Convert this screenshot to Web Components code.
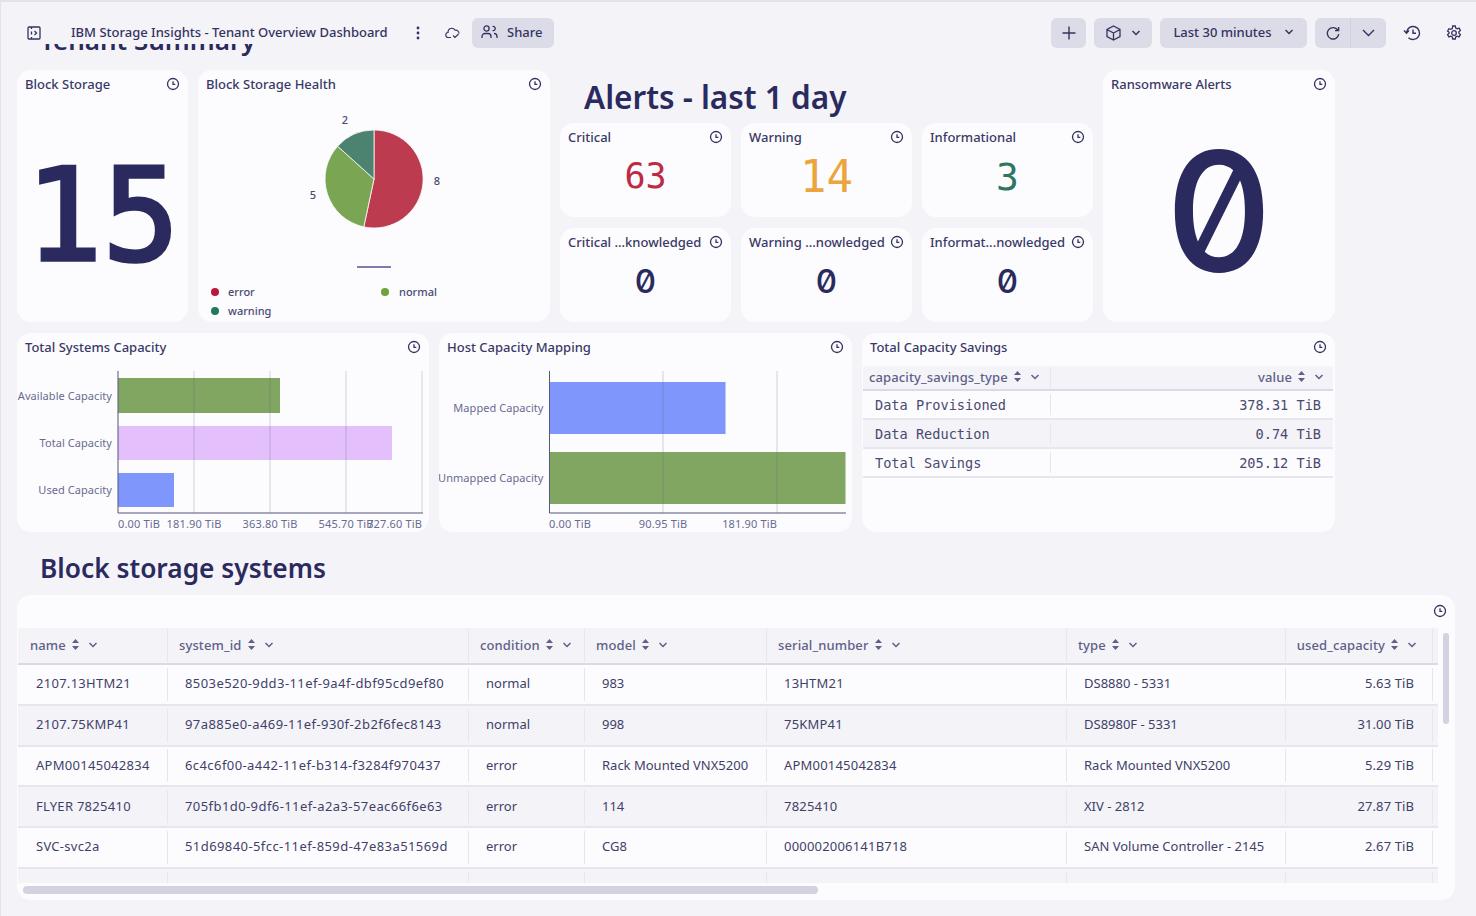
<!DOCTYPE html>
<html lang="en">
<head>
<meta charset="utf-8">
<title>IBM Storage Insights - Tenant Overview Dashboard</title>
<style>
  html, body { margin: 0; height: 100%; }
  body {
    background: #f3f3f8;
    color: #2b2a5e;
    font-family: "Noto Sans", sans-serif;
    overflow: hidden;
  }
</style>
</head>
<body>
<wc-app></wc-app>

<script>
const SANS = "'Noto Sans', 'Liberation Sans', sans-serif";
const MONO = "'DejaVu Sans Mono', 'Liberation Mono', monospace";

const CLOCK = `<svg width="14" height="14" viewBox="0 0 14 14" fill="none" stroke="#34335f" stroke-width="1.3"><circle cx="7" cy="7" r="5.5"/><path d="M7 4.2V7.3H9.3"/></svg>`;
const CARET = `<svg width="10" height="6" viewBox="0 0 10 6" fill="none" stroke="currentColor" stroke-width="1.5"><path d="M1.5 1l3.5 3.5L8.5 1"/></svg>`;
const SORT = `<svg width="7" height="11" viewBox="0 0 7 11" fill="currentColor"><path d="M3.5 0L7 4H0zM3.5 11L0 7h7z"/></svg>`;

class WcButton extends HTMLElement {
  constructor() {
    super();
    this.attachShadow({ mode: 'open' });
    this.shadowRoot.innerHTML = `
    <style>
      :host {
        display: inline-flex;
        align-items: center;
        justify-content: center;
        gap: 9px;
        height: 30px;
        padding: 0 10px 2px;
        box-sizing: border-box;
        background: #dcdce8;
        border-radius: 6px;
        font-size: 13px;
        font-weight: 500;
        color: #34335f;
      }
    </style>
    <slot></slot>`;
  }
}
customElements.define('wc-button', WcButton);

class WcHeader extends HTMLElement {
  constructor() {
    super();
    this.attachShadow({ mode: 'open' });
    this.shadowRoot.innerHTML = `
    <style>
      :host {
        display: flex;
        align-items: flex-start;
        position: relative;
        z-index: 2;
        height: 44px;
        box-sizing: border-box;
        padding: 18px 14px 0 27px;
        color: #34335f;
      }
      svg { display: block; }
      .title { margin-left: 30px; font-size: 13px; font-weight: 500; line-height: 28px; width: 318px; white-space: nowrap; }
      .icon { height: 30px; display: flex; align-items: center; }
      .spacer { flex: 1; }
      .split { display: flex; background: #dcdce8; border-radius: 6px; height: 30px; }
      .split > div { display: flex; align-items: center; justify-content: center; }
    </style>
    <div class="icon"><svg width="14" height="14" viewBox="0 0 14 14" fill="none" stroke="#34335f" stroke-width="1.3"><rect x="1" y="1" width="12" height="12" rx="1"/><path d="M4.5 1v2M4.5 5.5v3M4.5 11v2M7.5 5l2 2-2 2"/></svg></div>
    <div class="title">IBM Storage Insights - Tenant Overview Dashboard</div>
    <div class="icon" style="margin-left:27px"><svg width="4" height="14" viewBox="0 0 4 14" fill="#34335f"><circle cx="2" cy="2" r="1.4"/><circle cx="2" cy="7" r="1.4"/><circle cx="2" cy="12" r="1.4"/></svg></div>
    <div class="icon" style="margin-left:25px"><svg width="16" height="12" viewBox="0 0 16 12" fill="none" stroke="#34335f" stroke-width="1.1"><path d="M6 10.5H3.5a2.5 2.5 0 0 1-.4-5A3.700 3.700 0 0 1 10 3.200a3.200 3.200 0 0 1 4 3.300M8 8.500l2 2 3.500-3.500"/></svg></div>
    <wc-button style="margin-left:11px;width:82px;justify-content:flex-start;padding-left:9px">
      <svg width="17" height="14" viewBox="0 0 17 14" fill="none" stroke="#34335f" stroke-width="1.3"><circle cx="5.5" cy="3.5" r="2.6"/><path d="M1 13v-1.5A3 3 0 0 1 4 8.500h3a3 3 0 0 1 3 3V13M11.500 1.500a2.100 2.100 0 1 1 0 4M13 8.500a3 3 0 0 1 3 3V13"/></svg>
      <span>Share</span>
    </wc-button>
    <div class="spacer"></div>
    <wc-button style="width:35px;padding:0"><svg width="14" height="14" viewBox="0 0 14 14" fill="none" stroke="#34335f" stroke-width="1.4"><path d="M7 .5v13M.5 7h13"/></svg></wc-button>
    <wc-button style="margin-left:8px;width:58px;gap:10px;padding:0"><svg width="15" height="16" viewBox="0 0 15 16" fill="none" stroke="#34335f" stroke-width="1.3"><path d="M7.500 1L14 4.500v7L7.500 15 1 11.500v-7zM1 4.500L7.500 8 14 4.500M7.500 8v7"/></svg>${CARET}</wc-button>
    <wc-button style="margin-left:8px;width:147px;gap:12px;padding:0 0 2px">Last 30 minutes ${CARET}</wc-button>
    <div class="split" style="margin-left:8px;width:71px">
      <div style="width:35px;border-right:1px solid #cfcfdf"><svg width="14" height="14" viewBox="0 0 14 14" fill="none" stroke="#34335f" stroke-width="1.4"><path d="M11.800 4.200A5.700 5.700 0 1 0 12.700 8M12.600 1v3.600H9"/></svg></div>
      <div style="flex:1"><svg width="13" height="8" viewBox="0 0 13 8" fill="none" stroke="#34335f" stroke-width="1.4"><path d="M1 1l5.500 5.500L12 1"/></svg></div>
    </div>
    <div class="icon" style="margin-left:17px"><svg width="18" height="16" viewBox="0 0 18 16" fill="none" stroke="#34335f" stroke-width="1.4"><path d="M3.500 7.500A6.500 6.500 0 1 1 5.500 12.700M1 5.500l2.500 2.700L6 5.500M10 4.500V8.300h3"/></svg></div>
    <div class="icon" style="margin-left:25px"><svg width="16" height="16" viewBox="0 0 16 16" fill="none" stroke="#34335f" stroke-width="1.3"><circle cx="8" cy="8" r="2.300"/><path d="M6.700 1h2.600l.4 2 1.500.8 1.900-.7 1.300 2.300-1.500 1.300v1.600l1.500 1.300-1.300 2.300-1.900-.7-1.500.8-.4 2H6.700l-.4-2-1.500-.8-1.900.7-1.300-2.300 1.500-1.300V7.300L1.600 6l1.300-2.300 1.900.7 1.500-.8z"/></svg></div>`;
  }
}
customElements.define('wc-header', WcHeader);

// one tile of the dashboard: title row with the clock, content in the slot
class WcPanel extends HTMLElement {
  constructor() {
    super();
    this.attachShadow({ mode: 'open' });
    this.shadowRoot.innerHTML = `
    <style>
      :host {
        display: flex;
        flex-direction: column;
        min-width: 0;
        background: #fcfcfe;
        border-radius: 14px;
        overflow: hidden;
        font-family: ${SANS};
      }
      .head {
        display: flex;
        justify-content: space-between;
        align-items: center;
        height: 29px;
        box-sizing: border-box;
        padding: 0 8px 1px 8px;
        flex: none;
        font-size: 13px;
        font-weight: 500;
        color: #3a3966;
      }
      .head span { white-space: nowrap; }
      svg { display: block; }
      .body { flex: 1; display: flex; min-height: 0; position: relative; }
      ::slotted(*) { flex: 1; min-width: 0; }
    </style>
    <div class="head"><span></span>${CLOCK}</div>
    <div class="body"><slot></slot></div>`;
  }
  connectedCallback() {
    this.shadowRoot.querySelector('.head span').textContent = this.getAttribute('label') || '';
  }
}
customElements.define('wc-panel', WcPanel);

class WcValue extends HTMLElement {
  constructor() {
    super();
    this.attachShadow({ mode: 'open' });
    this.shadowRoot.innerHTML = `
    <style>
      :host { display: flex; align-items: center; justify-content: center; line-height: 1; font-family: ${MONO}; box-sizing: border-box; }
      /* slashed zero: only Inter has the feature among the installed fonts */
      :host([zero]) { font-family: Inter, sans-serif; font-weight: 500; font-feature-settings: "zero"; }
    </style>
    <slot></slot>`;
  }
}
customElements.define('wc-value', WcValue);

class WcPie extends HTMLElement {
  constructor() {
    super();
    this.attachShadow({ mode: 'open' });
    const cx = 176, cy = 80, r = 49;
    const pt = deg => (cx + r * Math.sin(deg * Math.PI / 180)).toFixed(1) + ' ' + (cy - r * Math.cos(deg * Math.PI / 180)).toFixed(1);
    const slice = (a, b, c) => `<path d="M${cx} ${cy}L${pt(a)}A${r} ${r} 0 ${b - a > 180 ? 1 : 0} 1 ${pt(b)}Z" fill="${c}" stroke="#fcfcfe" stroke-width=".8"/>`;
    this.shadowRoot.innerHTML = `
    <style>
      :host { display: block; }
      svg { display: block; position: absolute; left: 0; top: 0; }
      text { font-family: ${SANS}; font-size: 11px; font-weight: 500; fill: #4a4a72; }
    </style>
    <svg width="352" height="223" viewBox="0 0 352 223">
      ${slice(0, 192, '#bd3b4f')}${slice(192, 312, '#7aa653')}${slice(312, 360, '#4b8370')}
      <text x="147" y="25" text-anchor="middle">2</text>
      <text x="239" y="86" text-anchor="middle">8</text>
      <text x="115" y="100" text-anchor="middle">5</text>
      <rect x="159" y="167" width="34" height="2" fill="#7c7cae"/>
      <circle cx="17" cy="193" r="4" fill="#b8183a"/><text x="30" y="197">error</text>
      <circle cx="187" cy="193" r="4" fill="#6fa13d"/><text x="201" y="197">normal</text>
      <circle cx="17" cy="212" r="4" fill="#20795a"/><text x="30" y="216">warning</text>
    </svg>`;
  }
}
customElements.define('wc-pie', WcPie);

// horizontal bars, drawn in panel coordinates since the plot is a free canvas
class WcBars extends HTMLElement {
  set config(c) {
    const root = this.shadowRoot || this.attachShadow({ mode: 'open' });
    root.innerHTML = `
    <style>
      :host { display: block; }
      svg { display: block; position: absolute; left: 0; top: 0; overflow: visible; }
      text { font-family: ${SANS}; font-size: 11px; letter-spacing: .06px; fill: #6a6a90; }
    </style>
    <svg width="${c.w}" height="170">
      ${c.bars.map(b => `
        <rect x="${c.x0}" y="${b.y}" width="${b.w}" height="${b.h}" fill="${b.c}"/>
        <text x="${c.x0 - 6}" y="${b.y + b.h / 2 + 4}" text-anchor="end">${b.label}</text>`).join('')}
      ${c.grid.map(x => `<line x1="${x}" x2="${x}" y1="${c.top}" y2="${c.base}" stroke="#55557d" stroke-opacity=".25"/>`).join('')}
      <path d="M${c.x0} ${c.top}V${c.base}H${c.w - 6}" fill="none" stroke="#55557d"/>
      ${c.ticks.map(t => `<text x="${t.x}" y="${c.base + 15}" text-anchor="${t.a || 'middle'}" style="letter-spacing:.15px">${t.t}</text>`).join('')}
    </svg>`;
  }
}
customElements.define('wc-bars', WcBars);

class WcHeading extends HTMLElement {
  constructor() {
    super();
    this.attachShadow({ mode: 'open' });
    this.shadowRoot.innerHTML = `
    <style>
      :host { display: block; font-weight: 600; color: #2b2a5e; white-space: nowrap; line-height: 1; }
    </style>
    <slot></slot>`;
  }
}
customElements.define('wc-heading', WcHeading);

// table: columns [{key,w,right,ls}], rows of arrays
class WcTable extends HTMLElement {
  set config(c) {
    const root = this.shadowRoot || this.attachShadow({ mode: 'open' });
    const cols = c.cols.map(k => k.w + 'px').join(' ');
    const cell = (txt, col) => `<div class="cell${col.right ? ' right' : ''}"><span style="letter-spacing:${col.ls || 0}px">${txt}</span></div>`;
    root.innerHTML = `
    <style>
      :host { display: block; overflow: hidden; color: ${c.color}; }
      .row { display: grid; grid-template-columns: ${cols}; height: ${c.rowH}px; box-sizing: border-box; align-items: center; border-bottom: 2px solid #e6e6ef; }
      .row.odd { background: #f3f3f8; }
      .row.head { background: #f3f3f8; height: ${c.headH}px; border-bottom: 2px solid #dadae6; color: #5f5f88; font-family: ${SANS}; font-size: 13px; font-weight: 500; letter-spacing: .12px; }
      .row.body { font-family: ${c.font}; font-size: ${c.size}px; }
      .cell { display: flex; align-items: center; height: ${c.divH}px; box-sizing: border-box; padding: 0 ${c.padR}px ${c.padB}px ${c.padL}px; border-right: 1.500px solid #e6e6ef; white-space: nowrap; gap: 6px; }
      .cell.right { justify-content: flex-end; }
      ${c.bareLast ? '.cell:last-child { border-right: 0; }' : ''}
      .head .cell { padding: 0 ${c.headR}px 2px ${c.headL}px; }
      .row .cell:first-child { padding-left: ${c.padL + (c.firstExtra || 0)}px; }
      .head .cell:first-child { padding-left: ${c.headL + (c.firstExtra || 0)}px; }
      svg { display: block; flex: none; }
      svg + svg { margin-left: 3px; }
    </style>
    <div class="row head">${c.cols.map(k => `<div class="cell${k.right ? ' right' : ''}"><span>${k.key}</span>${SORT}${CARET}</div>`).join('')}</div>
    ${c.rows.map((r, i) => `<div class="row body${i % 2 ? ' odd' : ''}">${r.map((t, j) => cell(t, c.cols[j])).join('')}</div>`).join('')}`;
  }
}
customElements.define('wc-table', WcTable);

class WcScrollbar extends HTMLElement {
  constructor() {
    super();
    this.attachShadow({ mode: 'open' });
    this.shadowRoot.innerHTML = `<style>:host { display: block; position: absolute; background: #d2d2e0; border-radius: 4px; }</style>`;
  }
}
customElements.define('wc-scrollbar', WcScrollbar);

class WcApp extends HTMLElement {
  constructor() {
    super();
    this.attachShadow({ mode: 'open' });
    this.shadowRoot.innerHTML = `
    <style>
      :host {
        display: block;
        width: 1476px;
        height: 916px;
        overflow: hidden;
        background: #f3f3f8;
        box-shadow: inset 1px 2px 0 #e2e2ea;
        font-family: ${SANS};
        color: #2b2a5e;
      }
      main { height: 872px; overflow: hidden; padding: 0 0 0 17px; }
      .sec { margin: -17px 0 0 23px; font-size: 26px; height: 43px; }
      .row1 { display: grid; grid-template-columns: 171px 352px 532px 233px; column-gap: 10px; height: 252px; }
      .row1 > :last-child { margin-left: 1px; }
      .alerts { display: flex; flex-direction: column; min-width: 0; }
      .alerts wc-heading { font-size: 31.500px; margin: 11px 0 0 24px; height: 42px; }
      .stats { display: grid; grid-template-columns: repeat(3, 171px); grid-template-rows: 94px 94px; column-gap: 10px; row-gap: 11px; }
      .row2 { display: grid; grid-template-columns: 412px 413px 473px; column-gap: 10px; height: 199px; margin-top: 11px; }
      .sys { font-size: 26.300px; margin: 23px 0 12px 23px; height: 28px; }
      .tablecard { position: relative; display: block; width: 1438px; height: 305px; background: #fcfcfe; border-radius: 14px; overflow: hidden; }
      .tablecard .clock { display: flex; justify-content: flex-end; padding: 9px 8px 0; height: 24px; }
      .stat { padding-bottom: 16px; }
    </style>
    <wc-header></wc-header>
    <main>
      <wc-heading class="sec">Tenant Summary</wc-heading>
      <section class="row1">
        <wc-panel label="Block Storage"><wc-value style="font-size:128px;padding-top:10px;-webkit-text-stroke:3.500px #2b2a5e">15</wc-value></wc-panel>
        <wc-panel label="Block Storage Health"><wc-pie></wc-pie></wc-panel>
        <div class="alerts">
          <wc-heading>Alerts - last 1 day</wc-heading>
          <div class="stats">
            <wc-panel label="Critical"><wc-value class="stat" style="font-size:35px;color:#bd2a44">63</wc-value></wc-panel>
            <wc-panel label="Warning"><wc-value class="stat" style="font-size:44px;color:#eba53c">14</wc-value></wc-panel>
            <wc-panel label="Informational"><wc-value class="stat" style="font-size:38px;color:#2f7562">3</wc-value></wc-panel>
            <wc-panel label="Critical ...knowledged"><wc-value zero class="stat" style="font-size:33px">0</wc-value></wc-panel>
            <wc-panel label="Warning ...nowledged"><wc-value zero class="stat" style="font-size:33px">0</wc-value></wc-panel>
            <wc-panel label="Informat...nowledged"><wc-value zero class="stat" style="font-size:33px">0</wc-value></wc-panel>
          </div>
        </div>
        <wc-panel label="Ransomware Alerts"><wc-value zero style="font-size:165px;padding-top:2px">0</wc-value></wc-panel>
      </section>
      <section class="row2">
        <wc-panel label="Total Systems Capacity"><wc-bars id="b1"></wc-bars></wc-panel>
        <wc-panel label="Host Capacity Mapping"><wc-bars id="b2"></wc-bars></wc-panel>
        <wc-panel label="Total Capacity Savings"><wc-table id="t1" style="margin:4px 2px 0 1px"></wc-table></wc-panel>
      </section>
      <wc-heading class="sys">Block storage systems</wc-heading>
      <div class="tablecard">
        <div class="clock">${CLOCK}</div>
        <wc-table id="t2" style="width:1420px;height:255px;margin-left:1px"></wc-table>
        <wc-scrollbar style="left:6px;top:291px;width:795px;height:8px"></wc-scrollbar>
        <wc-scrollbar style="left:1426px;top:38px;width:6px;height:91px"></wc-scrollbar>
      </div>
    </main>`;

    const $ = id => this.shadowRoot.getElementById(id);
    const GREEN = '#80a661', PINK = '#e3bffb', BLUE = '#7f96fc';
    $('b1').config = {
      w: 412, x0: 101, top: 9, base: 151, grid: [177, 253, 329, 405],
      bars: [
        { y: 16, h: 35, w: 162, c: GREEN, label: 'Available Capacity' },
        { y: 64, h: 34, w: 274, c: PINK, label: 'Total Capacity' },
        { y: 111, h: 34, w: 56, c: BLUE, label: 'Used Capacity' }
      ],
      ticks: [
        { x: 101, t: '0.00 TiB', a: 'start' }, { x: 177, t: '181.90 TiB' }, { x: 253, t: '363.80 TiB' },
        { x: 329, t: '545.70 TiB' }, { x: 405, t: '727.60 TiB', a: 'end' }
      ]
    };
    $('b2').config = {
      w: 413, x0: 110.5, top: 9, base: 151, grid: [224, 338],
      bars: [
        { y: 20, h: 52, w: 176, c: BLUE, label: 'Mapped Capacity' },
        { y: 90, h: 52, w: 296, c: GREEN, label: 'Unmapped Capacity' }
      ],
      ticks: [
        { x: 110, t: '0.00 TiB', a: 'start' }, { x: 224, t: '90.95 TiB' }, { x: 338, t: '181.90 TiB', a: 'end' }
      ]
    };
    $('t1').config = {
      font: MONO, size: 13.6, color: '#4a4a70', rowH: 29, headH: 25, divH: 21, padL: 12, padR: 12, padB: 0, headL: 6, headR: 9, bareLast: true,
      cols: [{ key: 'capacity_savings_type', w: 188 }, { key: 'value', w: 282, right: true }],
      rows: [['Data Provisioned', '378.31 TiB'], ['Data Reduction', '0.74 TiB'], ['Total Savings', '205.12 TiB']]
    };
    $('t2').config = {
      font: SANS, size: 13, color: '#3f3f68', rowH: 40.75, headH: 37, divH: 33, padL: 17, padR: 18, padB: 2, headL: 11, headR: 15, firstExtra: 1,
      cols: [
        { key: 'name', w: 150, ls: .28 }, { key: 'system_id', w: 301, ls: .42 }, { key: 'condition', w: 116 },
        { key: 'model', w: 182 }, { key: 'serial_number', w: 300, ls: .2 }, { key: 'type', w: 219 },
        { key: 'used_capacity', w: 147, right: true, ls: .1 }
      ],
      rows: [
        ['2107.13HTM21', '8503e520-9dd3-11ef-9a4f-dbf95cd9ef80', 'normal', '983', '13HTM21', 'DS8880 - 5331', '5.63 TiB'],
        ['2107.75KMP41', '97a885e0-a469-11ef-930f-2b2f6fec8143', 'normal', '998', '75KMP41', 'DS8980F - 5331', '31.00 TiB'],
        ['APM00145042834', '6c4c6f00-a442-11ef-b314-f3284f970437', 'error', 'Rack Mounted VNX5200', 'APM00145042834', 'Rack Mounted VNX5200', '5.29 TiB'],
        ['FLYER 7825410', '705fb1d0-9df6-11ef-a2a3-57eac66f6e63', 'error', '114', '7825410', 'XIV - 2812', '27.87 TiB'],
        ['SVC-svc2a', '51d69840-5fcc-11ef-859d-47e83a51569d', 'error', 'CG8', '000002006141B718', 'SAN Volume Controller - 2145', '2.67 TiB'],
        ['', '', '', '', '', '', '']
      ]
    };
  }
}
customElements.define('wc-app', WcApp);
</script>
</body>
</html>
